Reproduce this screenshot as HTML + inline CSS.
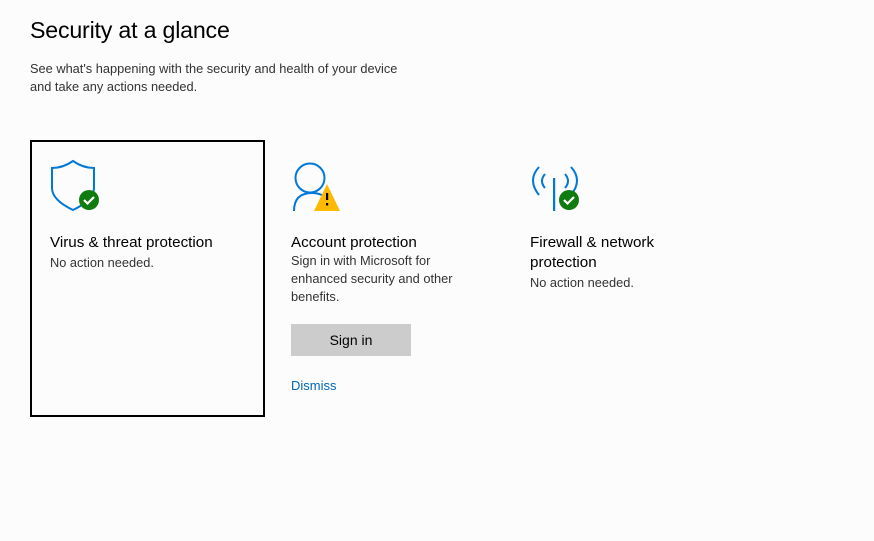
<!DOCTYPE html>
<html><head><meta charset="utf-8"><style>
body{margin:0;width:874px;height:541px;background:#fcfcfc;font-family:"Liberation Sans",sans-serif;position:relative;overflow:hidden;color:#000}
.a{position:absolute;white-space:nowrap}
h1{position:absolute;left:30px;top:17px;margin:0;font-weight:normal;font-size:23.2px;letter-spacing:-0.2px}
.s{font-size:12.8px;color:#333;line-height:18px}
.t{font-size:15.2px;line-height:20px}
.box{position:absolute;left:30px;top:140px;width:231px;height:273px;border:2px solid #000}
.btn{position:absolute;left:291px;top:324px;width:120px;height:32px;background:#ccc;font-size:14px;text-align:center;line-height:32px}
</style></head><body>
<h1>Security at a glance</h1>
<div class="a s" style="left:30px;top:60px">See what's happening with the security and health of your device<br>and take any actions needed.</div>
<div class="box"></div>
<svg class="a" style="left:0;top:0" width="874" height="541">
<path d="M52 168 Q63 168 73 161 Q83 168 94 168 V188 Q94 200 73 210 Q52 200 52 188 Z" fill="none" stroke="#0078d7" stroke-width="2"/>
<circle cx="89" cy="200" r="10" fill="#107c10"/>
<path d="M84 200 l3.5 3.5 l6.5 -6.5" stroke="#fff" stroke-width="2.2" fill="none"/>
<circle cx="310" cy="178" r="14.5" fill="none" stroke="#0078d7" stroke-width="2"/>
<path d="M294 211 Q294 193 312 193 Q320 193 325 197" fill="none" stroke="#0078d7" stroke-width="2"/>
<path d="M327 184 L340 211 L314 211 Z" fill="#ffb900"/>
<rect x="326" y="193" width="2.2" height="7" fill="#000"/><rect x="326" y="203" width="2.2" height="2.5" fill="#000"/>
<path d="M539 167 Q527 180 539 195 M545 174 Q539 181 545 188 M565 174 Q571 181 565 188 M571 167 Q583 180 571 195" fill="none" stroke="#0078d7" stroke-width="2"/>
<rect x="553" y="178" width="2.2" height="33" fill="#0078d7"/>
<circle cx="569" cy="200" r="10" fill="#107c10"/>
<path d="M564 200 l3.5 3.5 l6.5 -6.5" stroke="#fff" stroke-width="2.2" fill="none"/>
</svg>
<div class="a t" style="left:50px;top:233px">Virus &amp; threat protection</div>
<div class="a s" style="left:50px;top:254px">No action needed.</div>
<div class="a t" style="left:291px;top:233px">Account protection</div>
<div class="a s" style="left:291px;top:252px">Sign in with Microsoft for<br>enhanced security and other<br>benefits.</div>
<div class="btn">Sign in</div>
<div class="a" style="left:291px;top:378px;font-size:13px;color:#0067b8">Dismiss</div>
<div class="a t" style="left:530px;top:233px">Firewall &amp; network<br>protection</div>
<div class="a s" style="left:530px;top:274px">No action needed.</div>
</body></html>
